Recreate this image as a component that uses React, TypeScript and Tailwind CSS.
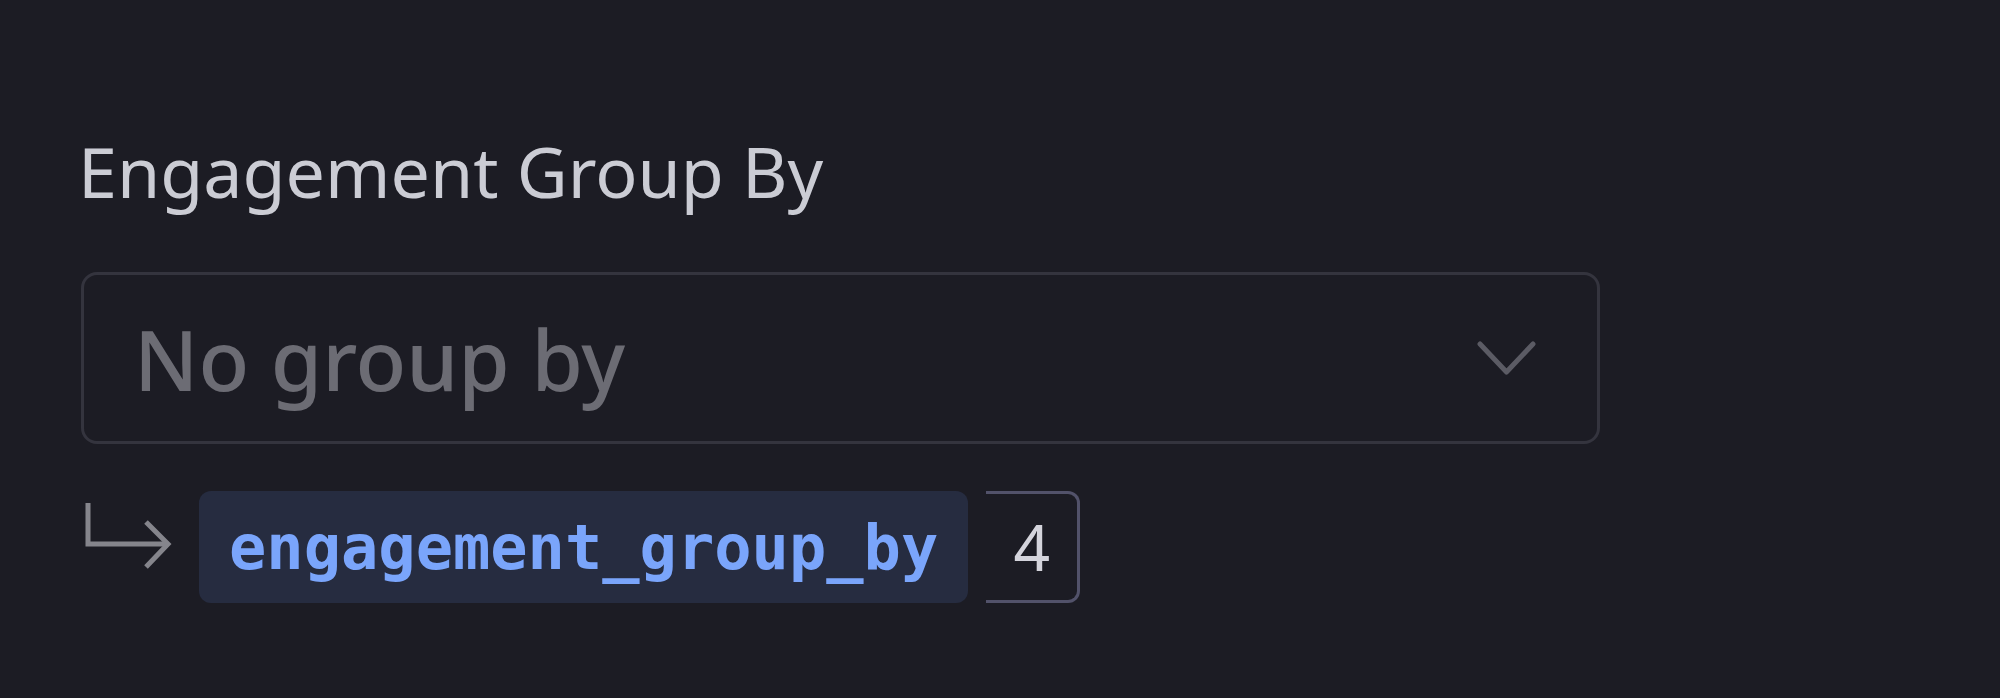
import React from 'react';

const sans = '"Noto Sans", "Open Sans", sans-serif';
const mono = '"DejaVu Sans Mono", "Liberation Mono", monospace';

const ChevronDown: React.FC = () => (
  <svg width="59" height="35" viewBox="0 0 59 35" fill="none" className="shrink-0">
    <polyline points="3,3 29.5,31 56,3" stroke="#5b5b64" strokeWidth="5" strokeLinecap="round" strokeLinejoin="round" />
  </svg>
);

const ReturnArrow: React.FC = () => (
  <svg width="90" height="70" viewBox="0 0 90 70" fill="none" className="shrink-0">
    <path d="M4 2 V43 H84" stroke="#85858c" strokeWidth="5" />
    <path d="M62 21 L84 43 L62 66" stroke="#85858c" strokeWidth="5" />
  </svg>
);

export default function App() {
  const groupByColumn = 'engagement_group_by';
  const position = 4;

  return (
    <div className="min-h-[698px] w-full bg-[#1c1c24] pl-[78px] pt-[136px]" style={{ fontFamily: sans }}>
      <div className="flex w-[1522px] flex-col">
        <label className="text-[70px] leading-none text-[#cbccd4]">Engagement Group By</label>

        <button
          type="button"
          className="mt-[66px] ml-[3px] flex h-[172px] w-[1519px] items-center justify-between rounded-[16px] border-[3px] border-[#34343e] bg-[#1c1c24] pl-[50px] pr-[61px] text-left"
        >
          <span className="text-[83px] font-medium leading-none text-[#6c6c74]">No group by</span>
          <ChevronDown />
        </button>

        <div className="mt-[47px] flex items-start">
          <div className="ml-[6px] mt-[10px]">
            <ReturnArrow />
          </div>
          <span
            className="ml-[25px] flex h-[112px] items-center rounded-[12px] bg-[#262c40] px-[30px] text-[62px] font-bold text-[#7aa5fb]"
            style={{ fontFamily: mono }}
          >
            {groupByColumn}
          </span>
          <span className="ml-[18px] flex h-[112px] w-[94px] items-center justify-center rounded-r-[12px] border-y-[3px] border-r-[3px] border-[#52526a] text-[64px] leading-none text-[#d4d4dc]">
            {position}
          </span>
        </div>
      </div>
    </div>
  );
}
